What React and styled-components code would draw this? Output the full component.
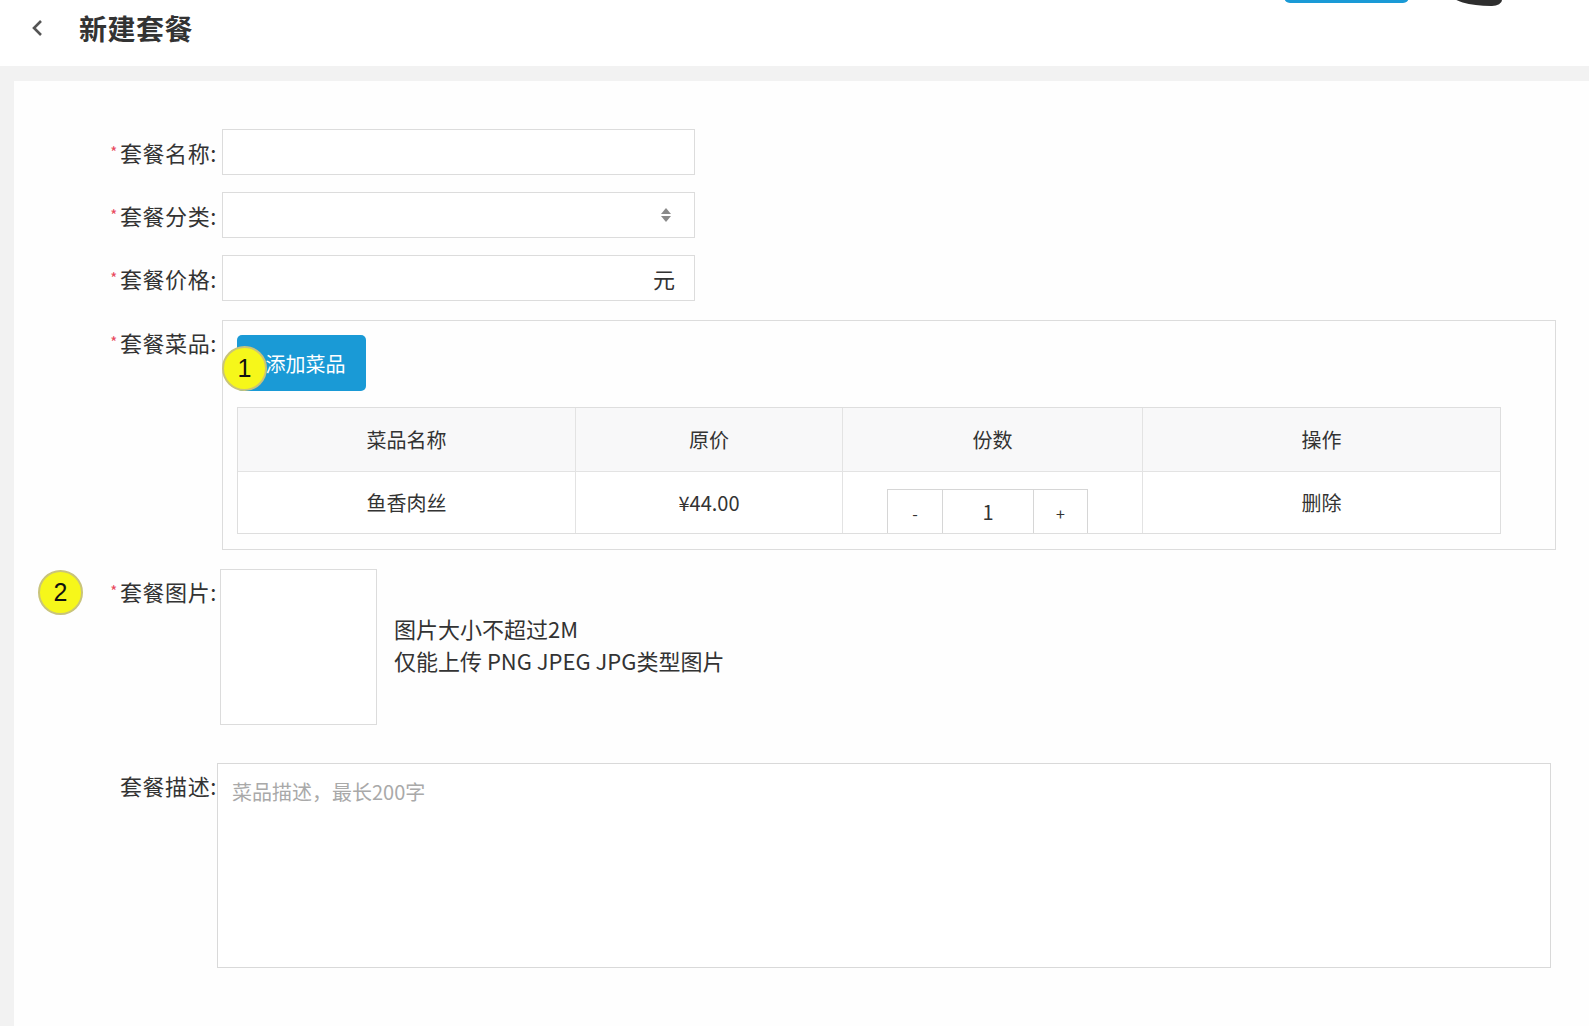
import React from 'react';
import styled, { createGlobalStyle } from 'styled-components';

const GlobalStyle = createGlobalStyle`
  html, body {
    margin: 0;
    padding: 0;
    background: #ffffff;
    font-family: "Noto Sans CJK SC", "Noto Sans", "Liberation Sans", sans-serif;
    color: #333;
  }
  * { box-sizing: border-box; }
`;

const Page = styled.div`
  width: 1589px;
  height: 1026px;
  overflow: hidden;
  display: flex;
  flex-direction: column;
`;

const Header = styled.header`
  height: 66px;
  background: #fff;
  display: flex;
  align-items: center;
  padding-left: 29px;
  flex-shrink: 0;
`;

const BackIcon = styled.svg`
  width: 18px;
  height: 20px;
  margin-top: -10px;
`;

const Title = styled.h1`
  margin: -10px 0 0 32px;
  font-size: 28px;
  font-weight: 700;
  color: #333;
  letter-spacing: 0.5px;
`;

/* partially cut-off toolbar at the very top right */
const HeaderActions = styled.div`
  margin-left: auto;
  align-self: flex-start;
  display: flex;
  align-items: flex-start;
  gap: 42px;
  margin-right: 87px;
  margin-top: -38px;
`;

const TopButton = styled.div`
  width: 125px;
  height: 41px;
  border-radius: 6px;
  background: #1a9ad6;
`;

const TopAvatar = styled.div`
  width: 51px;
  height: 44px;
  border-radius: 0 0 10px 40px / 0 0 6px 12px;
  background: #2e2e2e;
`;

const Body = styled.main`
  flex: 1;
  background: #f2f2f2;
  padding: 15px 0 0 14px;
  display: flex;
`;

const Card = styled.section`
  flex: 1;
  background: #fefefe;
  padding: 48px 0 0 83px;
  display: flex;
  flex-direction: column;
  gap: 17px;
  position: relative;
`;

const Row = styled.div`
  display: flex;
  align-items: ${(p) => (p.$center ? 'center' : 'flex-start')};
  margin-top: ${(p) => p.$space || 0}px;
  position: relative;
`;

const Label = styled.label`
  width: 120px;
  flex-shrink: 0;
  text-align: right;
  font-size: 22px;
  letter-spacing: 0.6px;
  line-height: 44px;
  color: #333;
  white-space: nowrap;
`;

const Star = styled.span`
  color: #e8495c;
  font-size: 15px;
  vertical-align: 4px;
  margin-right: 2px;
`;

const Field = styled.div`
  margin-left: ${(p) => p.$shift ?? 5}px;
`;

const InputBox = styled.div`
  width: 473px;
  height: 46px;
  border: 1px solid #dcdcdc;
  background: #fff;
  display: flex;
  align-items: center;
  justify-content: flex-end;
  padding-right: 19px;
  font-size: 22px;
  color: #333;
`;

const SortIcon = styled.svg`
  width: 12px;
  height: 18px;
  margin-right: 3px;
`;

const DishBox = styled.div`
  width: 1334px;
  border: 1px solid #dcdcdc;
  padding: 14px 0 15px 14px;
  display: flex;
  flex-direction: column;
  align-items: flex-start;
  gap: 16px;
`;

const AddButton = styled.button`
  width: 129px;
  height: 56px;
  border: none;
  border-radius: 5px;
  background: #1a9ad6;
  color: #fff;
  font-family: inherit;
  font-size: 20px;
  padding: 0 0 0 8px;
`;

const Table = styled.div`
  width: 1264px;
  border: 1px solid #dedede;
  display: grid;
  grid-template-columns: 337px 267px 300px 1fr;
`;

const HeadCell = styled.div`
  height: 64px;
  background: #f8f8f9;
  display: flex;
  align-items: center;
  justify-content: center;
  font-size: 20px;
  color: #333;
  border-bottom: 1px solid #e3e3e3;
  border-left: ${(p) => (p.$first ? 'none' : '1px solid #e3e3e3')};
`;

const Cell = styled.div`
  height: 61px;
  display: flex;
  align-items: ${(p) => (p.$bottom ? 'flex-end' : 'center')};
  justify-content: center;
  font-size: 20px;
  color: #333;
  background: #fff;
  border-left: ${(p) => (p.$first ? 'none' : '1px solid #e3e3e3')};
  padding-right: ${(p) => (p.$bottom ? 10 : 0)}px;
`;

const Counter = styled.div`
  display: flex;
  height: 44px;
  border: 1px solid #d6d6d6;
  border-bottom: none;
`;

const CounterCell = styled.div`
  width: ${(p) => p.$w}px;
  display: flex;
  align-items: center;
  justify-content: center;
  font-size: ${(p) => (p.$small ? 16 : 20)}px;
  padding-top: ${(p) => (p.$small ? 2 : 0)}px;
  border-left: ${(p) => (p.$first ? 'none' : '1px solid #d6d6d6')};
`;

const UploadBox = styled.div`
  width: 157px;
  height: 156px;
  border: 1px solid #dcdcdc;
  background: #fff;
`;

const Hint = styled.div`
  margin-left: 17px;
  padding-bottom: 6px;
  font-size: 22px;
  line-height: 32px;
  color: #333;
`;

const TextArea = styled.div`
  width: 1334px;
  height: 205px;
  border: 1px solid #d9d9d9;
  background: #fff;
  padding: 13px 14px;
  font-size: 20px;
  color: #a9a9a9;
`;

/* yellow step markers laid over the form */
const Marker = styled.div`
  position: absolute;
  left: ${(p) => p.$x}px;
  top: ${(p) => p.$y}px;
  width: 45px;
  height: 45px;
  border-radius: 50%;
  background: #f6f71a;
  border: 2px solid #c9c47a;
  display: flex;
  align-items: center;
  justify-content: center;
  font-family: "Liberation Sans", Arial, sans-serif;
  font-size: 25px;
  color: #111;
`;

const dishes = [{ name: '鱼香肉丝', price: '¥44.00', count: 1 }];

export default function App() {
  return (
    <>
      <GlobalStyle />
      <Page>
        <Header>
          <BackIcon viewBox="0 0 18 20">
            <polyline points="12,3 5,10 12,17" fill="none" stroke="#555" strokeWidth="2.6" />
          </BackIcon>
          <Title>新建套餐</Title>
          <HeaderActions>
            <TopButton />
            <TopAvatar />
          </HeaderActions>
        </Header>
        <Body>
          <Card>
            <Row $center>
              <Label><Star>*</Star>套餐名称:</Label>
              <Field><InputBox /></Field>
            </Row>
            <Row $center>
              <Label><Star>*</Star>套餐分类:</Label>
              <Field>
                <InputBox>
                  <SortIcon viewBox="0 0 12 18">
                    <polygon points="6,2 11,8 1,8" fill="#8a8a8a" />
                    <polygon points="1,10 11,10 6,16" fill="#8a8a8a" />
                  </SortIcon>
                </InputBox>
              </Field>
            </Row>
            <Row $center>
              <Label><Star>*</Star>套餐价格:</Label>
              <Field><InputBox>元</InputBox></Field>
            </Row>
            <Row $space={2}>
              <Label><Star>*</Star>套餐菜品:</Label>
              <Field>
                <DishBox>
                  <AddButton>添加菜品</AddButton>
                  <Table>
                    <HeadCell $first>菜品名称</HeadCell>
                    <HeadCell>原价</HeadCell>
                    <HeadCell>份数</HeadCell>
                    <HeadCell>操作</HeadCell>
                    {dishes.map((d) => (
                      <React.Fragment key={d.name}>
                        <Cell $first>{d.name}</Cell>
                        <Cell>{d.price}</Cell>
                        <Cell $bottom>
                          <Counter>
                            <CounterCell $w={54} $first $small>-</CounterCell>
                            <CounterCell $w={91}>{d.count}</CounterCell>
                            <CounterCell $w={54} $small>+</CounterCell>
                          </Counter>
                        </Cell>
                        <Cell>删除</Cell>
                      </React.Fragment>
                    ))}
                  </Table>
                </DishBox>
              </Field>
              <Marker $x={125} $y={26}>1</Marker>
            </Row>
            <Row $space={2}>
              <Label><Star>*</Star>套餐图片:</Label>
              <Field $shift={3}>
                <Row $center>
                  <UploadBox />
                  <Hint>
                    图片大小不超过2M
                    <br />
                    仅能上传 PNG JPEG JPG类型图片
                  </Hint>
                </Row>
              </Field>
              <Marker $x={-59} $y={1}>2</Marker>
            </Row>
            <Row $space={21}>
              <Label>套餐描述:</Label>
              <Field $shift={0}>
                <TextArea>菜品描述，最长200字</TextArea>
              </Field>
            </Row>
          </Card>
        </Body>
      </Page>
    </>
  );
}
